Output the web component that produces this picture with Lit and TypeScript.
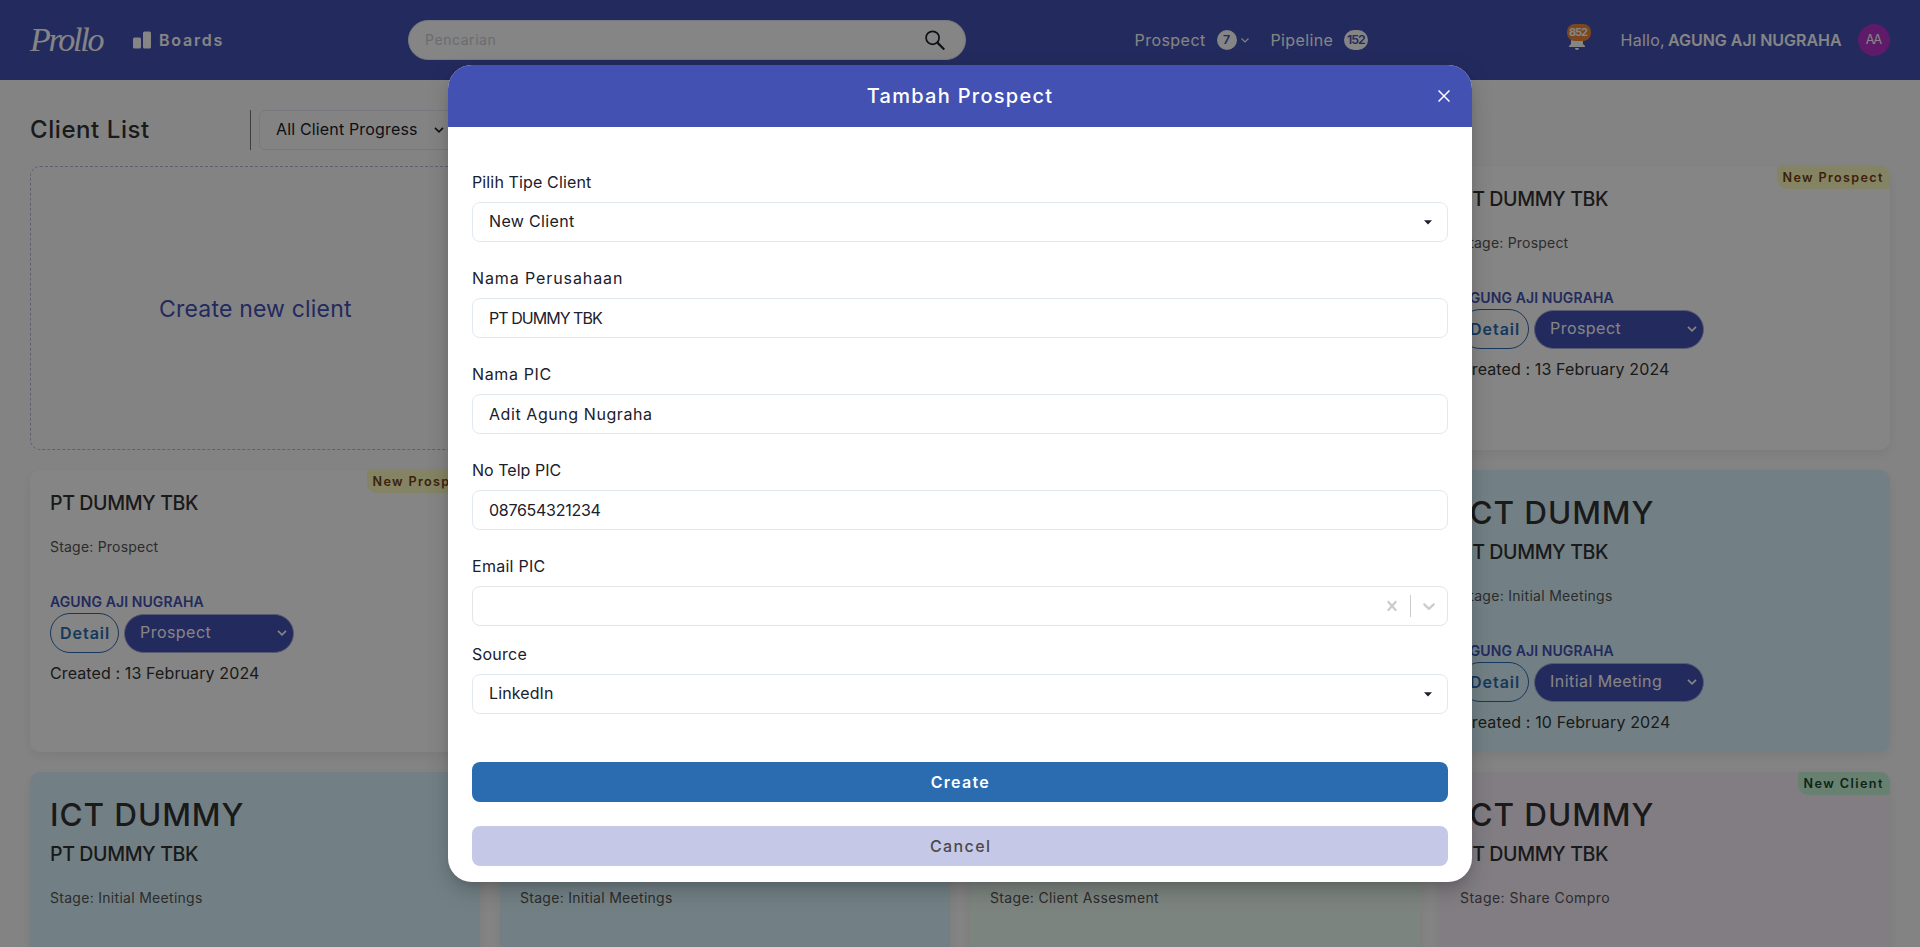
import { LitElement, html, css, svg, nothing } from "lit";
import { customElement, property } from "lit/decorators.js";

const ruler = document.createElement("canvas").getContext("2d")!;

/** Text whose tracking is adjusted so that its glyphs span `w` pixels. */
@customElement("fit-text")
class FitText extends LitElement {
  @property() text = "";
  @property({ type: Number }) w = 0;

  static styles = css`
    :host { display: inline-block; white-space: pre; flex: none; text-align: left; }
  `;

  updated() {
    const cs = getComputedStyle(this);
    ruler.font = `${cs.fontStyle} ${cs.fontWeight} ${cs.fontSize} ${cs.fontFamily}`;
    const m = ruler.measureText(this.text);
    const ink = m.actualBoundingBoxLeft + m.actualBoundingBoxRight;
    this.style.width = `${this.w}px`;
    this.style.letterSpacing = `${(this.w - ink) / Math.max(1, this.text.length - 1)}px`;
  }

  render() {
    return html`${this.text}`;
  }
}

const fit = (text: string, w: number) => html`<fit-text .text=${text} .w=${w}></fit-text>`;

interface Client {
  create?: boolean;
  tone?: string;
  heading?: boolean;
  tag?: "New Prospect" | "New Client";
  stage: [string, number];
  status: [string, number];
  created: [string, number];
}

const prospect: Client = {
  tone: "plain",
  tag: "New Prospect",
  stage: ["Stage: Prospect", 108.6],
  status: ["Prospect", 69.5],
  created: ["Created : 13 February 2024", 209],
};
const meeting: Client = {
  tone: "sky",
  heading: true,
  stage: ["Stage: Initial Meetings", 152],
  status: ["Initial Meeting", 110],
  created: ["Created : 10 February 2024", 210],
};

const clients: Client[] = [
  { ...prospect, create: true },
  prospect,
  prospect,
  prospect,
  prospect,
  prospect,
  meeting,
  meeting,
  meeting,
  meeting,
  { ...meeting, tone: "mint", stage: ["Stage: Client Assesment", 169] },
  { ...meeting, tone: "lilac", tag: "New Client", stage: ["Stage: Share Compro", 149.3] },
];

interface Field {
  label: [string, number];
  value?: [string, number];
  kind: "select" | "input" | "combo";
}

const fields: Field[] = [
  { label: ["Pilih Tipe Client", 118], value: ["New Client", 84], kind: "select" },
  { label: ["Nama Perusahaan", 149], value: ["PT DUMMY TBK", 113], kind: "input" },
  { label: ["Nama PIC", 77.5], value: ["Adit Agung Nugraha", 162], kind: "input" },
  { label: ["No Telp PIC", 87.5], value: ["087654321234", 111.5], kind: "input" },
  { label: ["Email PIC", 71.5], kind: "combo" },
  { label: ["Source", 54.5], value: ["LinkedIn", 63], kind: "select" },
];

const chevron = html`<svg class="chev" width="10" height="6" viewBox="0 0 10 6">
  ${svg`<path d="M1 .9 5 4.8 9 .9" fill="none" stroke="currentColor" stroke-width="1.7"/>`}
</svg>`;

@customElement("app-root")
class AppRoot extends LitElement {
  static styles = css`
    :host {
      display: block;
      position: relative;
      width: 100%;
      height: 947px;
      overflow: hidden;
      background: #fcfcfc;
      color: #333;
      font: 400 16px/24px Inter, "Open Sans", sans-serif;
    }
    * { box-sizing: border-box; }
    svg { display: block; flex: none; }

    .header { display: flex; align-items: center; height: 80px; padding: 0 30px; background: #4351b3; color: #fff; }
    .logo { font: italic 400 34px/40px "Liberation Serif", serif; }
    .bars { margin-left: 28.5px; }
    .boards { display: flex; margin-left: 8px; font-weight: 600; }
    .search {
      display: flex; align-items: center; justify-content: space-between;
      width: 558px; height: 40px; margin-left: 186px; padding: 0 20px 0 16.5px;
      border: 1px solid #e2e8f0; border-radius: 20px; background: #fff;
      color: #cbd0d8; font-size: 14px;
    }
    .glass { color: #1a202c; }
    .nav { display: flex; align-items: center; margin-left: 169px; }
    .pill {
      display: flex; align-items: center; justify-content: center;
      min-width: 20px; height: 20px; margin-left: 12.5px; padding: 0 3px;
      border-radius: 10px; background: #fff; color: #4351b3;
      font-size: 12.4px; font-weight: 600; line-height: 20px;
    }
    .nav-chev { margin-left: 4px; }
    .pipeline { display: flex; margin-left: 22px; }
    .user { display: flex; align-items: center; margin-left: auto; }
    .bell { position: relative; }
    .count {
      position: absolute; top: -4px; left: 2px; width: 24px; height: 17px;
      display: flex; justify-content: center; border-radius: 8px; background: #ed8936;
      font-size: 11px; font-weight: 700; line-height: 17px;
    }
    .hello { display: flex; gap: 5px; margin-left: 32px; }
    .bold { font-weight: 600; }
    .avatar {
      display: flex; align-items: center; justify-content: center;
      width: 32px; height: 32px; margin-left: 16px; border-radius: 50%;
      background: #b832cc; font-size: 12.8px;
    }

    .toolbar { display: flex; align-items: center; height: 86px; padding: 30px 30px 16px; }
    .toolbar .title { display: flex; width: 220px; font-size: 24px; font-weight: 500; line-height: 36px; }
    .filter { display: flex; height: 40px; padding-left: 8px; border-left: 1px solid #777; }
    .filter-box {
      display: flex; align-items: center; gap: 17px; width: 210px; padding: 0 0 2px 16px;
      border: 1px solid #e2e8f0; border-radius: 6px; color: #1a202c;
    }
    .chev { margin-top: 1px; }
    .grid {
      display: grid; grid-template-columns: repeat(4, 1fr); grid-template-rows: 284px 282px 284px;
      gap: 20px; padding: 0 30px;
    }
    .card {
      position: relative; padding: 18px 20px; border-radius: 10px; color: #333;
      box-shadow: 0 4px 12px rgba(0, 0, 0, 0.07);
    }
    .create {
      display: flex; align-items: center; justify-content: center; padding-top: 2px;
      border: 1px dashed #b6b8e0; border-radius: 10px; color: #4351b3; font-size: 23px;
    }
    .plain { background: #fff; }
    .sky { background: #dbf6ff; }
    .mint { background: #edfef4; }
    .lilac { background: #f8f0fc; }
    .tag {
      position: absolute; top: 0; right: 0; height: 23px; padding: 0 7px 0 6px;
      border-radius: 2px 10px 2px 10px; font-size: 12.6px; font-weight: 600; line-height: 23px;
    }
    .tag-prospect { background: #fefcbf; color: #744210; }
    .tag-client { background: #c6f6d5; color: #1c4532; }
    .ict { display: flex; font-size: 31.5px; font-weight: 500; line-height: 49px; }
    .company { display: flex; font-size: 19.6px; font-weight: 500; line-height: 30px; }
    .stage { display: flex; margin-top: 18px; color: #555; font-size: 14px; line-height: 21px; }
    .owner { display: flex; margin-top: 34px; color: #4351b3; font-size: 14px; font-weight: 600; line-height: 21px; }
    .actions { display: flex; align-items: center; gap: 5px; height: 40px; margin-top: 1px; }
    .detail {
      display: flex; align-items: center; justify-content: center; width: 69px; height: 40px; padding-right: 1px;
      border: 1px solid #2b6cb0; border-radius: 20px; color: #2b6cb0; font-weight: 600;
    }
    .status {
      display: flex; align-items: center; justify-content: space-between; width: 169.5px; height: 39px;
      padding: 0 6px 2px 15px; border: 1px solid #a9aed6; border-radius: 20px; background: #4351b3; color: #fff;
    }
    .created { display: flex; margin-top: 8px; }

    .overlay {
      position: absolute; inset: 0; display: flex; align-items: flex-start; justify-content: center;
      padding-top: 65px; background: rgba(0, 0, 0, 0.48);
    }
    .modal {
      width: 1024px; border-radius: 24px; background: #fff; color: #1a202c; overflow: hidden;
      box-shadow: 0 10px 15px -3px rgba(0, 0, 0, 0.1), 0 4px 6px -2px rgba(0, 0, 0, 0.05),
        0 8px 24px rgba(0, 0, 0, 0.14);
    }
    .modal-head {
      display: grid; grid-template-columns: 1fr auto 1fr; align-items: center; height: 62px;
      padding: 0 22px; background: #4351b3; color: #fff; font-size: 20px; font-weight: 500; line-height: 30px;
    }
    .close { grid-column: 3; justify-self: end; }
    .modal-title { grid-column: 2; display: flex; margin-left: -1px; }
    .modal-body { display: flex; flex-direction: column; padding: 43px 24px 16px; }
    .field { display: flex; flex-direction: column; gap: 8px; margin-bottom: 24px; }
    .field.combo { margin-bottom: 16px; }
    .label { display: flex; height: 24px; }
    .box {
      display: flex; align-items: center; justify-content: space-between; height: 40px;
      padding: 0 15px 0 16px; border: 1px solid #e2e8f0; border-radius: 8px;
    }
    .box.select { padding-bottom: 2px; }
    .caret { margin-top: 2px; }
    .box.combo { justify-content: flex-end; padding: 0 8px 0 0; border-color: #e5e5e5; color: #ccc; }
    .sep { width: 1px; height: 22px; margin: 0 8px; background: #ccc; }
    .btn {
      display: flex; align-items: center; justify-content: center; height: 40px; margin-top: 24px;
      padding-right: 1px; border-radius: 8px;
    }
    .primary { background: #2b6cb0; color: #fff; font-weight: 600; }
    .secondary { background: #c6c8e8; color: #4a4a4a; font-weight: 500; }
  `;

  private card(c: Client) {
    if (c.create) return html`<div class="create">${fit("Create new client", 192)}</div>`;
    return html`<div class="card ${c.tone}">
      ${c.tag === "New Prospect" ? html`<div class="tag tag-prospect">${fit(c.tag, 100.5)}</div>` : nothing}
      ${c.tag === "New Client" ? html`<div class="tag tag-client">${fit(c.tag, 79.5)}</div>` : nothing}
      ${c.heading ? html`<div class="ict">${fit("ICT DUMMY", 191.5)}</div>` : nothing}
      <div class="company">${fit("PT DUMMY TBK", 147)}</div>
      <div class="stage">${fit(...c.stage)}</div>
      <div class="owner">${fit("AGUNG AJI NUGRAHA", 153.5)}</div>
      <div class="actions">
        <div class="detail">${fit("Detail", 48)}</div>
        <div class="status">${fit(...c.status)}${chevron}</div>
      </div>
      <div class="created">${fit(...c.created)}</div>
    </div>`;
  }

  private field(f: Field) {
    return html`<div class="field ${f.kind}">
      <div class="label">${fit(...f.label)}</div>
      <div class="box ${f.kind}">
        ${f.value ? fit(...f.value) : nothing}
        ${f.kind === "select"
          ? html`<svg class="caret" width="8" height="5" viewBox="0 0 8 5"><path d="M0 .3h8L4 4.6z" fill="#1a202c" /></svg>`
          : nothing}
        ${f.kind === "combo"
          ? html`<svg width="20" height="20" viewBox="0 0 20 20">
                <path
                  fill="currentColor"
                  d="M14.348 14.849c-0.469 0.469-1.229 0.469-1.697 0l-2.651-3.030-2.651 3.029c-0.469 0.469-1.229 0.469-1.697 0-0.469-0.469-0.469-1.229 0-1.697l2.758-3.15-2.759-3.152c-0.469-0.469-0.469-1.228 0-1.697s1.228-0.469 1.697 0l2.652 3.031 2.651-3.031c0.469-0.469 1.228-0.469 1.697 0s0.469 1.229 0 1.697l-2.758 3.152 2.758 3.15c0.469 0.469 0.469 1.229 0 1.698z"
                />
              </svg>
              <div class="sep"></div>
              <svg width="20" height="20" viewBox="0 0 20 20">
                <path
                  fill="currentColor"
                  d="M4.516 7.548c0.436-0.446 1.043-0.481 1.576 0l3.908 3.747 3.908-3.747c0.533-0.481 1.141-0.446 1.574 0 0.436 0.445 0.408 1.197 0 1.615-0.406 0.418-4.695 4.502-4.695 4.502-0.217 0.223-0.502 0.335-0.787 0.335s-0.57-0.112-0.789-0.335c0 0-4.287-4.084-4.695-4.502s-0.436-1.17 0-1.615z"
                />
              </svg>`
          : nothing}
      </div>
    </div>`;
  }

  render() {
    return html`
      <div class="header">
        <div class="logo">${fit("Prollo", 74.5)}</div>
        <svg class="bars" width="18" height="18" viewBox="0 0 18 18">
          <rect x="0" y="6.5" width="8" height="11" rx="1.5" fill="#fff" />
          <rect x="10" y="0.5" width="8" height="17" rx="1.5" fill="#fff" />
        </svg>
        <div class="boards">${fit("Boards", 62.5)}</div>
        <div class="search">
          ${fit("Pencarian", 69.5)}
          <svg class="glass" width="20" height="20" viewBox="0 0 20 20">
            <g fill="none" stroke="currentColor" stroke-width="1.7">
              <circle cx="7.6" cy="7.8" r="6.5" />
              <path d="M12.4 12.6 19.3 19.5" stroke-width="2.2" />
            </g>
          </svg>
        </div>
        <div class="nav">
          ${fit("Prospect", 69.5)}
          <div class="pill">${fit("7", 7)}</div>
          <svg class="nav-chev" width="8" height="5" viewBox="0 0 8 5">
            <path d="M.5.5 4 4 7.5.5" fill="none" stroke="#fff" stroke-width="1.1" />
          </svg>
          <div class="pipeline">${fit("Pipeline", 61)}</div>
          <div class="pill">${fit("152", 18)}</div>
        </div>
        <div class="user">
          <div class="bell">
            <svg width="24" height="24" viewBox="0 0 24 24">
              <path
                fill="#fff"
                d="M12 22c1.1 0 2-.9 2-2h-4c0 1.1.89 2 2 2zm6-6v-5c0-3.07-1.64-5.64-4.5-6.32V4c0-.83-.67-1.5-1.5-1.5s-1.5.67-1.5 1.5v.68C7.63 5.36 6 7.92 6 11v5l-2 2v1h16v-1l-2-2z"
              />
            </svg>
            <div class="count">${fit("852", 19)}</div>
          </div>
          <div class="hello">
            ${fit("Hallo,", 42.5)}
            <span class="bold">${fit("AGUNG AJI NUGRAHA", 174)}</span>
          </div>
          <div class="avatar">${fit("AA", 16.5)}</div>
        </div>
      </div>

      <div class="toolbar">
        <div class="title">${fit("Client List", 118)}</div>
        <div class="filter">
          <div class="filter-box">${fit("All Client Progress", 141)}${chevron}</div>
        </div>
      </div>

      <div class="grid">${clients.map((c) => this.card(c))}</div>

      <div class="overlay">
        <div class="modal">
          <div class="modal-head">
            <div class="modal-title">${fit("Tambah Prospect", 185.5)}</div>
            <svg class="close" width="12" height="12" viewBox="0 0 12 12">
              <path d="M.5.5l11 11M11.5.5l-11 11" stroke="#fff" stroke-width="1.5" />
            </svg>
          </div>
          <div class="modal-body">
            ${fields.map((f) => this.field(f))}
            <div class="btn primary">${fit("Create", 57.5)}</div>
            <div class="btn secondary">${fit("Cancel", 59)}</div>
          </div>
        </div>
      </div>
    `;
  }
}
